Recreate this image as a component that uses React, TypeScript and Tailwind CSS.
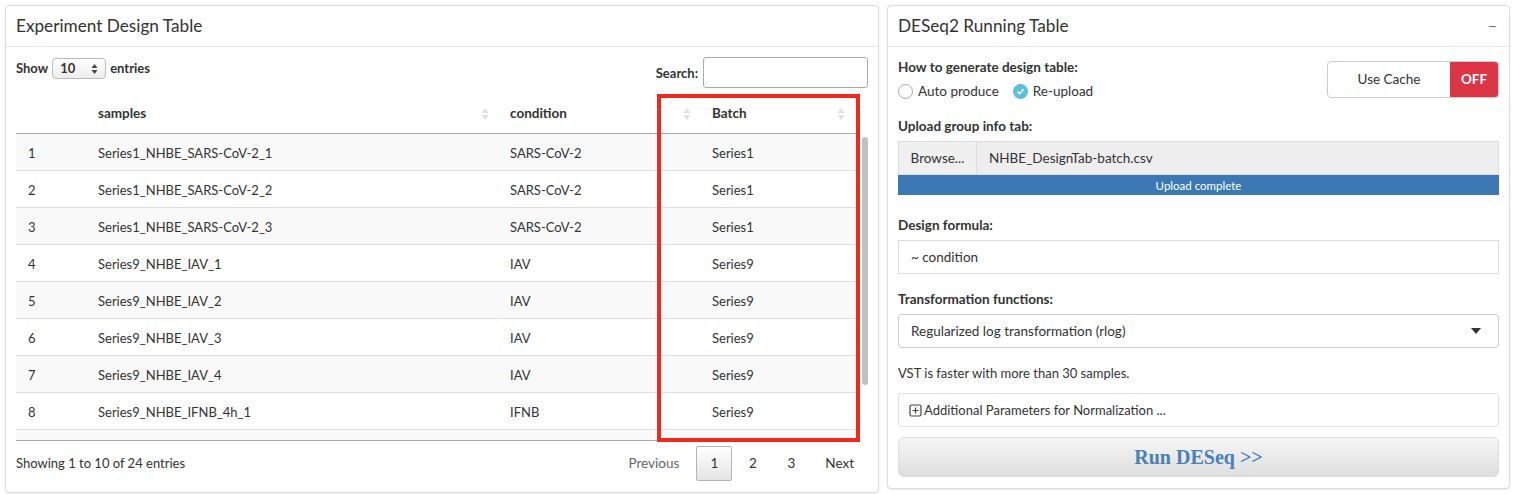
import React from "react";

const rows = [
  ["1", "Series1_NHBE_SARS-CoV-2_1", "SARS-CoV-2", "Series1"],
  ["2", "Series1_NHBE_SARS-CoV-2_2", "SARS-CoV-2", "Series1"],
  ["3", "Series1_NHBE_SARS-CoV-2_3", "SARS-CoV-2", "Series1"],
  ["4", "Series9_NHBE_IAV_1", "IAV", "Series9"],
  ["5", "Series9_NHBE_IAV_2", "IAV", "Series9"],
  ["6", "Series9_NHBE_IAV_3", "IAV", "Series9"],
  ["7", "Series9_NHBE_IAV_4", "IAV", "Series9"],
  ["8", "Series9_NHBE_IFNB_4h_1", "IFNB", "Series9"],
  ["", "", "", ""],
];

function SortIcon() {
  return (
    <svg width="8" height="14" viewBox="0 0 8 14" className="shrink-0">
      <path d="M4 1 L7.5 6 L0.5 6 Z" fill="#e2e2e2" />
      <path d="M4 13 L7.5 8 L0.5 8 Z" fill="#e2e2e2" />
    </svg>
  );
}

function Panel({ title, collapse, children, className }: { title: string; collapse?: boolean; children: React.ReactNode; className?: string }) {
  return (
    <div className={"flex flex-col rounded-[4px] border border-[#dcdcdc] bg-white shadow-[0_1px_2px_rgba(0,0,0,0.08)] " + (className ?? "")}>
      <div className="flex h-[41px] items-center justify-between border-b border-[#e6e6e6] pl-[10px] pr-[12px]">
        <span className="text-[17.2px] text-[#333]">{title}</span>
        {collapse && <span className="text-[16px] text-[#777]">−</span>}
      </div>
      {children}
    </div>
  );
}

export default function App() {
  return (
    <div className="flex gap-[8px] bg-white pl-[5px] pt-[5px] text-[#333] [font-family:Lato,'Liberation_Sans',sans-serif]" style={{ width: 1516, height: 495 }}>
      {/* Left panel */}
      <Panel title="Experiment Design Table" className="h-[488px] w-[874px]">
        <div className="relative px-[10px] pt-[10px]">
          <div className="flex items-start justify-between">
            <div className="flex items-center gap-[4px] pt-[1px] text-[13px] font-bold">
              <span>Show</span>
              <div className="flex h-[21px] w-[54px] items-center justify-between rounded-[4px] border border-[#bbb] bg-gradient-to-b from-white to-[#ededed] px-[7px] text-[13px]">
                <span>10</span>
                <svg width="7" height="12" viewBox="0 0 7 12">
                  <path d="M3.5 1 L6.5 5 L0.5 5 Z" fill="#444" />
                  <path d="M3.5 11 L6.5 7 L0.5 7 Z" fill="#444" />
                </svg>
              </div>
              <span>entries</span>
            </div>
            <div className="flex items-center gap-[5px] text-[13px] font-bold">
              <span className="pt-[2px]">Search:</span>
              <div className="h-[31px] w-[165px] rounded-[3px] border border-[#aaa] bg-white" />
            </div>
          </div>
          {/* table */}
          <div className="mt-[6px] flex">
            <div className="w-[840px] text-[13px]">
              <div className="flex h-[40px] items-center border-b border-[#aaa] text-[13.5px] font-bold">
                <div className="w-[70px]" />
                <div className="flex w-[412px] items-center justify-between pl-[12px] pr-[9px]">
                  <span>samples</span>
                  <SortIcon />
                </div>
                <div className="flex w-[202px] items-center justify-between pl-[12px] pr-[9px]">
                  <span>condition</span>
                  <SortIcon />
                </div>
                <div className="flex w-[156px] items-center justify-between pl-[12px] pr-[11px]">
                  <span>Batch</span>
                  <SortIcon />
                </div>
              </div>
              <div className="h-[307px] overflow-hidden border-b border-[#aaa]">
                {rows.map((r, i) => (
                  <div key={i} className={"flex h-[37px] items-center border-b border-[#ddd] pt-[3px] " + (i % 2 === 0 ? "bg-[#f9f9f9]" : "bg-white")}>
                    <div className="w-[70px] pl-[12px]">{r[0]}</div>
                    <div className="w-[412px] pl-[12px]">{r[1]}</div>
                    <div className="w-[202px] pl-[12px]">{r[2]}</div>
                    <div className="w-[156px] pl-[12px]">{r[3]}</div>
                  </div>
                ))}
              </div>
            </div>
            <div className="w-[14px] pt-[43px]">
              <div className="ml-[6px] h-[248px] w-[6px] rounded-full bg-[#c1c1c1]" />
            </div>
          </div>
          {/* footer */}
          <div className="flex items-center justify-between pt-[5px] text-[13px]">
            <span>Showing 1 to 10 of 24 entries</span>
            <div className="mr-[14px] flex items-center text-[13.5px]">
              <span className="pr-[17px] text-[#666]">Previous</span>
              <span className="flex h-[35px] w-[36px] items-center justify-center rounded-[2px] border border-[#b5b5b5] bg-gradient-to-b from-white to-[#e4e4e4]">1</span>
              <span className="w-[41px] text-center">2</span>
              <span className="w-[36px] text-center">3</span>
              <span className="pl-[16px]">Next</span>
            </div>
          </div>
          {/* highlight box */}
          <div className="absolute left-[651px] top-[47px] h-[348px] w-[203px] border-[4px] border-[#ee2a1e]" />
        </div>
      </Panel>

      {/* Right panel */}
      <Panel title="DESeq2 Running Table" collapse className="h-[484px] w-[623px]">
        <div className="px-[10px] pt-[10px] text-[13.5px]">
          <div className="flex justify-between">
            <div>
              <div className="h-[20px] text-[13.5px] font-bold leading-[20px]">How to generate design table:</div>
              <div className="mt-[4px] flex items-center text-[13.5px]">
                <span className="h-[15px] w-[15px] rounded-full border border-[#aaa] bg-white" />
                <span className="ml-[5px]">Auto produce</span>
                <span className="ml-[14px] flex h-[15px] w-[15px] items-center justify-center rounded-full bg-[#5bc0de]">
                  <svg width="9" height="9" viewBox="0 0 9 9">
                    <path d="M1.5 4.6 L3.7 6.7 L7.5 2.3" stroke="white" strokeWidth="1.6" fill="none" />
                  </svg>
                </span>
                <span className="ml-[5px]">Re-upload</span>
              </div>
            </div>
            <div className="mt-[4px] flex h-[37px] w-[172px] overflow-hidden rounded-[4px] border border-[#ccc]">
              <div className="flex flex-1 items-center justify-center text-[13.5px]">Use Cache</div>
              <div className="flex w-[48px] items-center justify-center bg-[#dc3545] text-[13.5px] font-bold text-white">OFF</div>
            </div>
          </div>
          <div className="mt-[15px] h-[20px] text-[13.5px] font-bold leading-[20px]">Upload group info tab:</div>
          <div className="mt-[5px] flex h-[34px] border border-[#ddd] bg-[#eee]">
            <div className="flex w-[78px] items-center justify-center border-r border-[#ddd] bg-[#f0f0f0]">Browse...</div>
            <div className="flex items-center pl-[12px]">NHBE_DesignTab-batch.csv</div>
          </div>
          <div className="flex h-[20px] items-center justify-center bg-[#3c78b4] text-[11.5px] text-white">Upload complete</div>
          <div className="mt-[20px] h-[20px] text-[13.5px] font-bold leading-[20px]">Design formula:</div>
          <div className="mt-[5px] flex h-[34px] items-center border border-[#ddd] pl-[12px] text-[13.5px]">~ condition</div>
          <div className="mt-[15px] h-[20px] text-[13.5px] font-bold leading-[20px]">Transformation functions:</div>
          <div className="mt-[5px] flex h-[34px] items-center justify-between rounded-[4px] border border-[#ccc] pl-[12px] pr-[17px]">
            <span>Regularized log transformation (rlog)</span>
            <svg width="10" height="6" viewBox="0 0 10 6"><path d="M0 0 L10 0 L5 6 Z" fill="#333" /></svg>
          </div>
          <div className="mt-[15px] h-[20px] text-[13px] leading-[20px]">VST is faster with more than 30 samples.</div>
          <div className="mt-[10px] flex h-[34px] items-center rounded-[3px] border border-[#e3e3e3] pl-[10px] text-[13px]">
            <svg width="13" height="13" viewBox="0 0 13 13" className="mr-[2px]">
              <rect x="1" y="1" width="11" height="11" rx="1.5" fill="none" stroke="#444" strokeWidth="1.2" />
              <path d="M6.5 3.5 V9.5 M3.5 6.5 H9.5" stroke="#444" strokeWidth="1.2" />
            </svg>
            <span>Additional Parameters for Normalization ...</span>
          </div>
          <div className="mt-[10px] flex h-[40px] items-center justify-center rounded-[6px] border border-[#ddd] bg-gradient-to-b from-[#f6f6f6] to-[#dedede] text-[20px] font-bold text-[#4a7fb8] [font-family:'Liberation_Serif',serif]">
            Run DESeq &gt;&gt;
          </div>
        </div>
      </Panel>
    </div>
  );
}
